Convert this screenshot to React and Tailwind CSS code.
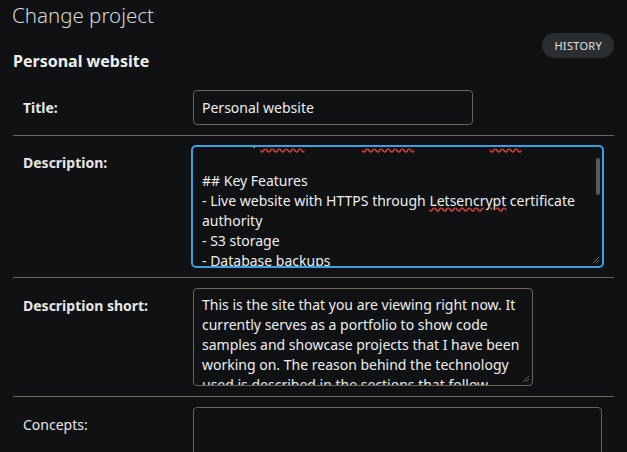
const Grip = () => (
    <svg className="absolute right-[2px] bottom-[2px]" width="9" height="9" viewBox="0 0 9 9">
        <path d="M8 2 L2 8 M8 5 L5 8" stroke="#6b6b6b" strokeWidth="1" />
    </svg>
)

const Label = ({ children, bold = true }) => (
    <div className={`w-[170px] pt-[8px] text-[14px] leading-[20px] text-[#e6e6e6] ${bold ? 'font-bold' : ''}`}>
        {children}
    </div>
)

const App = () => {
    return (
        <div className="w-[627px] h-[452px] overflow-hidden bg-[#0f1112] text-[#eeeeee]" style={{ fontFamily: '"Noto Sans", "Open Sans", sans-serif' }}>
            <div className="px-[13px]">
                <h1 className="text-[20.5px] leading-[30px] font-light text-[#d6d6d6] -ml-[1px]">Change project</h1>
                <div className="flex justify-end mt-[3px]">
                    <span className="h-[25px] px-[12px] rounded-full bg-[#2b2e31] text-[11px] leading-[25px] text-[#e0e0e0] tracking-[0.3px]">HISTORY</span>
                </div>
                <h2 className="-mt-[7px] text-[16px] leading-[20px] font-bold text-[#eeeeee]">Personal website</h2>

                <div className="mt-[9px]">
                    {/* Title */}
                    <div className="flex px-[10px] py-[10px] border-b border-[#6b6358]">
                        <Label>Title:</Label>
                        <div className="w-[280px] h-[35px] rounded-[4px] border border-[#6b6358] px-[8px] text-[14px] leading-[33px] text-[#eeeeee]">
                            Personal website
                        </div>
                    </div>

                    {/* Description */}
                    <div className="flex px-[10px] pt-[9px] pb-[9px] border-b border-[#6b6358]">
                        <Label>Description:</Label>
                        <div className="relative -ml-[2px] w-[413px] h-[123px] rounded-[5px] border-2 border-[#3b9fe0] overflow-hidden">
                            <div className="-mt-[16px] pl-[9px] pr-[20px] text-[14px] leading-[20px] text-[#eeeeee]">
                                <div className="whitespace-nowrap underline-offset-[2px]">
                                    Built on, <span className="underline decoration-wavy decoration-[#e04040]">Traefik</span> and the <span className="underline decoration-wavy decoration-[#e04040]">Hetzner</span> cloud with <span className="underline decoration-wavy decoration-[#e04040]">Nuxt</span>
                                </div>
                                <div>&nbsp;</div>
                                <div>## Key Features</div>
                                <div>- Live website with HTTPS through <span className="underline decoration-wavy decoration-[#e04040]">Letsencrypt</span> certificate authority</div>
                                <div>- S3 storage</div>
                                <div>- Database backups</div>
                                <div>- Continuous deployment</div>
                            </div>
                            <div className="absolute right-[2px] top-[11px] w-[4px] h-[37px] rounded-full bg-[#5a5a5a]" />
                            <Grip />
                        </div>
                    </div>

                    {/* Description short */}
                    <div className="flex px-[10px] py-[10px] border-b border-[#6b6358]">
                        <Label>Description short:</Label>
                        <div className="relative w-[340px] h-[98px] rounded-[4px] border border-[#6b6358] overflow-hidden">
                            <div className="pt-[6px] px-[8px] text-[14px] leading-[20px] text-[#eeeeee]">
                                This is the site that you are viewing right now. It currently serves as a portfolio to show code samples and showcase projects that I have been working on. The reason behind the technology used is described in the sections that follow.
                            </div>
                            <Grip />
                        </div>
                    </div>

                    {/* Concepts */}
                    <div className="flex px-[10px] py-[10px]">
                        <Label bold={false}>Concepts:</Label>
                        <div className="w-[409px] h-[98px] rounded-[4px] border border-[#6b6358]" />
                    </div>
                </div>
            </div>
        </div>
    )
}

export default App
